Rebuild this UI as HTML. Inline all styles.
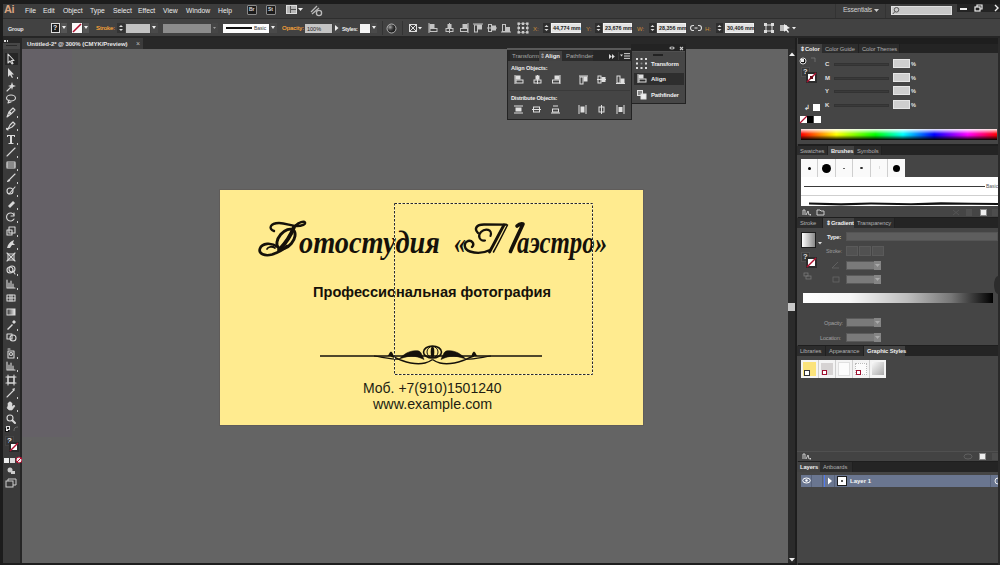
<!DOCTYPE html>
<html><head><meta charset="utf-8">
<style>
*{margin:0;padding:0;box-sizing:border-box}
html,body{width:1000px;height:565px;overflow:hidden;background:#1c1c1c;font-family:"Liberation Sans",sans-serif;color:#e6e6e6;position:relative}
.a{position:absolute}
.t{position:absolute;white-space:nowrap;font-size:6px;line-height:8px}
svg.a{overflow:visible}
</style></head><body>
<div class="a" style="left:3px;top:4px;width:997px;height:14px;background:#3c3c3c;"></div>
<div class="a" style="left:3px;top:18px;width:997px;height:1px;background:#2e2e2e;"></div>
<div class="t" style="left:4px;top:3px;font-size:11px;line-height:13px;color:#d8a481;font-weight:bold;letter-spacing:-0.5px;line-height:13px">Ai</div>
<div class="t" style="left:25px;top:7px;font-size:6.8px;line-height:8.8px;color:#ececec;line-height:8px">File</div>
<div class="t" style="left:43px;top:7px;font-size:6.8px;line-height:8.8px;color:#ececec;line-height:8px">Edit</div>
<div class="t" style="left:63px;top:7px;font-size:6.8px;line-height:8.8px;color:#ececec;line-height:8px">Object</div>
<div class="t" style="left:90px;top:7px;font-size:6.8px;line-height:8.8px;color:#ececec;line-height:8px">Type</div>
<div class="t" style="left:113px;top:7px;font-size:6.8px;line-height:8.8px;color:#ececec;line-height:8px">Select</div>
<div class="t" style="left:138px;top:7px;font-size:6.8px;line-height:8.8px;color:#ececec;line-height:8px">Effect</div>
<div class="t" style="left:163px;top:7px;font-size:6.8px;line-height:8.8px;color:#ececec;line-height:8px">View</div>
<div class="t" style="left:186px;top:7px;font-size:6.8px;line-height:8.8px;color:#ececec;line-height:8px">Window</div>
<div class="t" style="left:218px;top:7px;font-size:6.8px;line-height:8.8px;color:#ececec;line-height:8px">Help</div>
<div class="a" style="left:247px;top:5px;width:10px;height:10px;background:#1c1c1c;border:1px solid #8a8a8a;border-radius:1px"></div>
<div class="t" style="left:249px;top:6px;font-size:5px;line-height:7px;color:#ddd;font-weight:bold;line-height:7px">Br</div>
<div class="a" style="left:266px;top:5px;width:10px;height:10px;background:#1c1c1c;border:1px solid #8a8a8a;border-radius:1px"></div>
<div class="t" style="left:268px;top:6px;font-size:5px;line-height:7px;color:#ddd;font-weight:bold;line-height:7px">St</div>
<div class="a" style="left:286px;top:5px;width:11px;height:9px;background:#b5b5b5;border:1px solid #ddd"></div>
<div class="a" style="left:290px;top:6px;width:1px;height:7px;background:#555;"></div>
<div class="a" style="left:291px;top:9px;width:5px;height:1px;background:#555;"></div>
<svg class="a" style="left:298px;top:8px;" width="5" height="4" viewBox="0 0 5 4"><path d="M0 0 L5 0 L2.5 3 Z" fill="#eee"/></svg>
<svg class="a" style="left:309px;top:5px;" width="14" height="11" viewBox="0 0 14 11"><g fill="none" stroke="#bbb" stroke-width="1.3"><path d="M2 7 L8 1"/><path d="M3 9 L10 3"/><circle cx="10" cy="8" r="2.6"/></g></svg>
<div class="a" style="left:835px;top:4px;width:1px;height:14px;background:#333;"></div>
<div class="t" style="left:843px;top:6px;font-size:6.8px;line-height:8.8px;color:#d0d0d0;line-height:8px;letter-spacing:-0.2px">Essentials</div>
<svg class="a" style="left:874px;top:9px;" width="5" height="3" viewBox="0 0 5 3"><path d="M0 0 L5 0 L2.5 3 Z" fill="#ccc"/></svg>
<div class="a" style="left:885px;top:4px;width:1px;height:14px;background:#333;"></div>
<div class="a" style="left:891px;top:6px;width:61px;height:9px;background:#c9c9c9;border:1px solid #e0e0e0"></div>
<svg class="a" style="left:892px;top:6px;" width="8" height="9" viewBox="0 0 8 9"><g fill="none" stroke="#555" stroke-width="1"><circle cx="4.5" cy="3.8" r="2.3"/><path d="M3 5.5 L0.8 8"/></g></svg>
<div class="a" style="left:957px;top:4px;width:43px;height:8px;background:#242424;"></div>
<div class="a" style="left:960px;top:8px;width:7px;height:2px;background:#eee;"></div>
<svg class="a" style="left:974px;top:4px;" width="10" height="8" viewBox="0 0 10 8"><g fill="none" stroke="#eee" stroke-width="1.2"><rect x="1" y="3" width="5" height="4"/><path d="M3 3 V1 H8 V5 H6"/></g></svg>
<svg class="a" style="left:994px;top:4px;" width="6" height="8" viewBox="0 0 6 8"><path d="M1 1 L4 4 L1 7" fill="none" stroke="#eee" stroke-width="1.4"/></svg>
<div class="a" style="left:3px;top:19px;width:997px;height:17px;background:#424242;"></div>
<div class="a" style="left:3px;top:36px;width:997px;height:2px;background:#262626;"></div>
<div class="t" style="left:8px;top:24.5px;font-size:5.5px;line-height:7.5px;color:#e6e6e6;font-weight:bold;line-height:8px;letter-spacing:-0.2px">Group</div>
<div class="a" style="left:51px;top:23px;width:9px;height:10px;background:#1e1e1e;border:1px solid #ddd"></div>
<div class="t" style="left:53px;top:24px;font-size:7px;line-height:9px;color:#eee;font-weight:bold;line-height:8px">?</div>
<div class="a" style="left:61px;top:23px;width:6px;height:10px;background:#555;"></div>
<svg class="a" style="left:62px;top:26px;" width="5" height="4" viewBox="0 0 5 4"><path d="M0 0 L4 0 L2 3 Z" fill="#eee"/></svg>
<div class="a" style="left:72px;top:23px;width:10px;height:10px;background:#fafafa;"></div>
<svg class="a" style="left:72px;top:23px;" width="10" height="10" viewBox="0 0 10 10"><path d="M9 1 L1 9" stroke="#b01030" stroke-width="1.6"/></svg>
<div class="a" style="left:83px;top:23px;width:6px;height:10px;background:#555;"></div>
<svg class="a" style="left:84px;top:26px;" width="5" height="4" viewBox="0 0 5 4"><path d="M0 0 L4 0 L2 3 Z" fill="#eee"/></svg>
<div class="t" style="left:96px;top:24px;font-size:6px;line-height:8px;color:#e89a3a;line-height:8px;text-shadow:0 0 .5px #e89a3a">Stroke:</div>
<div class="a" style="left:117px;top:23px;width:8px;height:10px;background:#333;"></div>
<svg class="a" style="left:117px;top:23px;" width="8" height="10" viewBox="0 0 8 10"><path d="M2 4 L4 2 L6 4 Z M2 6 L6 6 L4 8 Z" fill="#ddd"/></svg>
<div class="a" style="left:126px;top:23.5px;width:24px;height:9.5px;background:#c2c2c2;"></div>
<div class="a" style="left:151px;top:23px;width:7px;height:10px;background:#4a4a4a;"></div>
<svg class="a" style="left:152px;top:26px;" width="5" height="4" viewBox="0 0 5 4"><path d="M0 0 L4 0 L2 3 Z" fill="#eee"/></svg>
<div class="a" style="left:163px;top:23.5px;width:48px;height:9.5px;background:#8c8c8c;"></div>
<div class="a" style="left:212px;top:23px;width:6px;height:10px;background:#464646;"></div>
<svg class="a" style="left:213px;top:27px;" width="4" height="3" viewBox="0 0 4 3"><path d="M0 0 L3 0 L1.5 2 Z" fill="#999"/></svg>
<div class="a" style="left:223px;top:23.5px;width:46px;height:9.5px;background:#fcfcfc;"></div>
<div class="a" style="left:226px;top:27px;width:26px;height:2px;background:#111;"></div>
<div class="t" style="left:254px;top:24.5px;font-size:5px;line-height:7px;color:#333;line-height:7px">Basic</div>
<div class="a" style="left:270px;top:23px;width:7px;height:10px;background:#4a4a4a;"></div>
<svg class="a" style="left:271px;top:26px;" width="5" height="4" viewBox="0 0 5 4"><path d="M0 0 L4 0 L2 3 Z" fill="#eee"/></svg>
<div class="t" style="left:282px;top:24px;font-size:6px;line-height:8px;color:#e89a3a;line-height:8px;text-shadow:0 0 .5px #e89a3a">Opacity:</div>
<div class="a" style="left:305px;top:23.5px;width:27px;height:9.5px;background:#c4c4c4;"></div>
<div class="t" style="left:307px;top:24.5px;font-size:5.5px;line-height:7.5px;color:#222;line-height:8px">100%</div>
<div class="a" style="left:333px;top:23px;width:7px;height:10px;background:#4a4a4a;"></div>
<svg class="a" style="left:335px;top:25px;" width="4" height="6" viewBox="0 0 4 6"><path d="M0 0 L3.5 3 L0 6 Z" fill="#eee"/></svg>
<div class="t" style="left:342px;top:24.5px;font-size:5.4px;line-height:7.4px;color:#eee;font-weight:bold;line-height:8px;letter-spacing:-0.3px">Styles:</div>
<div class="a" style="left:360px;top:23.5px;width:10px;height:9.5px;background:#f4f4f4;"></div>
<div class="a" style="left:371px;top:23px;width:6px;height:10px;background:#4a4a4a;"></div>
<svg class="a" style="left:372px;top:26px;" width="5" height="4" viewBox="0 0 5 4"><path d="M0 0 L4 0 L2 3 Z" fill="#eee"/></svg>
<div class="a" style="left:382px;top:21px;width:1px;height:14px;background:#333;"></div>
<svg class="a" style="left:386px;top:23px;" width="11" height="11" viewBox="0 0 11 11"><defs><radialGradient id="rc" cx="35%" cy="35%"><stop offset="0" stop-color="#aaa"/><stop offset=".6" stop-color="#444"/><stop offset="1" stop-color="#222"/></radialGradient></defs><circle cx="5.5" cy="5.5" r="4.5" fill="url(#rc)" stroke="#ccc" stroke-width=".8"/></svg>
<div class="a" style="left:402px;top:21px;width:1px;height:14px;background:#333;"></div>
<svg class="a" style="left:408px;top:23px;" width="14" height="10" viewBox="0 0 14 10"><g fill="none" stroke="#ddd" stroke-width="1"><rect x="1.5" y="1.5" width="7" height="7"/><path d="M1.5 1.5 L8.5 8.5 M8.5 1.5 L1.5 8.5"/></g><path d="M10 4 L14 4 L12 6.5 Z" fill="#eee"/></svg>
<svg class="a" style="left:428px;top:23px;" width="10" height="10" viewBox="0 0 10 10"><g fill="none" stroke="#c4c4c4" stroke-width="1"><path d="M1 0 V10"/><rect x="2" y="1.5" width="4" height="3" fill="#c4c4c4"/><rect x="2" y="5.5" width="7" height="3"/></g></svg>
<svg class="a" style="left:445px;top:23px;" width="10" height="10" viewBox="0 0 10 10"><g fill="none" stroke="#c4c4c4" stroke-width="1"><path d="M4.5 0 V10"/><rect x="3" y="1.5" width="3" height="3" fill="#c4c4c4"/><rect x="1" y="5.5" width="7" height="3"/></g></svg>
<svg class="a" style="left:460px;top:23px;" width="10" height="10" viewBox="0 0 10 10"><g fill="none" stroke="#c4c4c4" stroke-width="1"><path d="M8 0 V10"/><rect x="3" y="1.5" width="4" height="3" fill="#c4c4c4"/><rect x="0.5" y="5.5" width="7" height="3"/></g></svg>
<svg class="a" style="left:473px;top:23px;" width="10" height="10" viewBox="0 0 10 10"><g fill="none" stroke="#c4c4c4" stroke-width="1"><path d="M0 1 H10"/><rect x="1.5" y="2" width="3" height="7"/><rect x="5.5" y="2" width="3" height="4" fill="#c4c4c4"/></g></svg>
<svg class="a" style="left:487px;top:23px;" width="10" height="10" viewBox="0 0 10 10"><g fill="none" stroke="#c4c4c4" stroke-width="1"><path d="M0 5 H10"/><rect x="1.5" y="1.5" width="3" height="7"/><rect x="5.5" y="3" width="3" height="4" fill="#c4c4c4"/></g></svg>
<svg class="a" style="left:501px;top:23px;" width="10" height="10" viewBox="0 0 10 10"><g fill="none" stroke="#c4c4c4" stroke-width="1"><path d="M0 9 H10"/><rect x="1.5" y="1.5" width="3" height="7"/><rect x="5.5" y="4.5" width="3" height="4" fill="#c4c4c4"/></g></svg>
<svg class="a" style="left:517px;top:22px;" width="12" height="12" viewBox="0 0 12 12"><g fill="#ddd"><rect x="0.5" y="0.5" width="2.4" height="2.4"/><rect x="0.5" y="4.8" width="2.4" height="2.4"/><rect x="0.5" y="9.1" width="2.4" height="2.4"/><rect x="4.8" y="0.5" width="2.4" height="2.4"/><rect x="4.8" y="4.8" width="2.4" height="2.4"/><rect x="4.8" y="9.1" width="2.4" height="2.4"/><rect x="9.1" y="0.5" width="2.4" height="2.4"/><rect x="9.1" y="4.8" width="2.4" height="2.4"/><rect x="9.1" y="9.1" width="2.4" height="2.4"/></g><g fill="none" stroke="#bbb" stroke-width=".6"><rect x="1.7" y="1.7" width="8.6" height="8.6"/></g></svg>
<div class="t" style="left:533px;top:24.5px;font-size:6px;line-height:8px;color:#c98a3a;line-height:8px">X:</div>
<div class="a" style="left:543px;top:23px;width:7px;height:10px;background:#2e2e2e;"></div>
<svg class="a" style="left:543px;top:23px;" width="7" height="10" viewBox="0 0 7 10"><path d="M1.5 4 L3.5 2 L5.5 4 Z M1.5 6 L5.5 6 L3.5 8 Z" fill="#ddd"/></svg>
<div class="a" style="left:551px;top:22.5px;width:30px;height:10px;background:#e2e2e2;border:1px solid #f2f2f2"></div>
<div class="t" style="left:553px;top:24.5px;font-size:5.4px;line-height:7.4px;color:#1a1a1a;font-weight:bold;line-height:7px">44,774 mm</div>
<div class="t" style="left:586px;top:24.5px;font-size:6px;line-height:8px;color:#c98a3a;line-height:8px">Y:</div>
<div class="a" style="left:595px;top:23px;width:7px;height:10px;background:#2e2e2e;"></div>
<svg class="a" style="left:595px;top:23px;" width="7" height="10" viewBox="0 0 7 10"><path d="M1.5 4 L3.5 2 L5.5 4 Z M1.5 6 L5.5 6 L3.5 8 Z" fill="#ddd"/></svg>
<div class="a" style="left:603px;top:22.5px;width:29px;height:10px;background:#e2e2e2;border:1px solid #f2f2f2"></div>
<div class="t" style="left:605px;top:24.5px;font-size:5.4px;line-height:7.4px;color:#1a1a1a;font-weight:bold;line-height:7px">23,676 mm</div>
<div class="t" style="left:637px;top:24.5px;font-size:6px;line-height:8px;color:#c98a3a;line-height:8px">W:</div>
<div class="a" style="left:649px;top:23px;width:7px;height:10px;background:#2e2e2e;"></div>
<svg class="a" style="left:649px;top:23px;" width="7" height="10" viewBox="0 0 7 10"><path d="M1.5 4 L3.5 2 L5.5 4 Z M1.5 6 L5.5 6 L3.5 8 Z" fill="#ddd"/></svg>
<div class="a" style="left:657px;top:22.5px;width:29px;height:10px;background:#e2e2e2;border:1px solid #f2f2f2"></div>
<div class="t" style="left:659px;top:24.5px;font-size:5.4px;line-height:7.4px;color:#1a1a1a;font-weight:bold;line-height:7px">28,356 mm</div>
<svg class="a" style="left:691px;top:24px;" width="10" height="8" viewBox="0 0 10 8"><g fill="none" stroke="#ddd" stroke-width="1.1"><path d="M3 1.5 H2 A2.5 2.5 0 0 0 2 6.5 H3"/><path d="M7 1.5 H8 A2.5 2.5 0 0 1 8 6.5 H7"/><path d="M3.5 4 H6.5"/></g></svg>
<div class="t" style="left:705px;top:24.5px;font-size:6px;line-height:8px;color:#c98a3a;line-height:8px">H:</div>
<div class="a" style="left:716px;top:23px;width:7px;height:10px;background:#2e2e2e;"></div>
<svg class="a" style="left:716px;top:23px;" width="7" height="10" viewBox="0 0 7 10"><path d="M1.5 4 L3.5 2 L5.5 4 Z M1.5 6 L5.5 6 L3.5 8 Z" fill="#ddd"/></svg>
<div class="a" style="left:725px;top:22.5px;width:29px;height:10px;background:#e2e2e2;border:1px solid #f2f2f2"></div>
<div class="t" style="left:727px;top:24.5px;font-size:5.4px;line-height:7.4px;color:#1a1a1a;font-weight:bold;line-height:7px">30,406 mm</div>
<svg class="a" style="left:764px;top:23px;" width="10" height="10" viewBox="0 0 10 10"><g fill="none" stroke="#ddd" stroke-width="1"><rect x="2" y="2" width="6" height="6"/></g><g fill="#ddd"><rect x="0" y="0" width="3" height="3"/><rect x="7" y="0" width="3" height="3"/><rect x="0" y="7" width="3" height="3"/><rect x="7" y="7" width="3" height="3"/></g></svg>
<svg class="a" style="left:780px;top:23px;" width="17" height="11" viewBox="0 0 17 11"><g fill="#bbb"><rect x="0" y="2" width="7" height="6"/><path d="M4 1 L10 5 L7 6 L9 9 L8 10 L6 7 L4 9 Z" fill="#eee"/></g><path d="M12 4 L16 4 L14 6.5 Z" fill="#eee"/></svg>
<div class="a" style="left:3px;top:38px;width:792px;height:11px;background:#282828;"></div>
<div class="a" style="left:22px;top:38px;width:121px;height:11px;background:#3b3b3b;"></div>
<div class="t" style="left:27px;top:39.5px;font-size:6px;line-height:8px;color:#e6e6e6;font-weight:bold;line-height:8px;letter-spacing:-0.05px">Untitled-2* @ 300% (CMYK/Preview)</div>
<div class="t" style="left:136px;top:39px;font-size:7px;line-height:9px;color:#bbb;line-height:9px">&#215;</div>
<div class="a" style="left:3px;top:38px;width:18px;height:527px;background:#3a3a3a;"></div>
<div class="a" style="left:3px;top:38px;width:18px;height:5px;background:#262626;"></div>
<div class="a" style="left:4px;top:40px;width:1.5px;height:1.5px;background:#ddd;"></div>
<div class="a" style="left:6.5px;top:40px;width:1.5px;height:1.5px;background:#ddd;"></div>
<div class="a" style="left:3px;top:43px;width:18px;height:6px;background:#474747;"></div>
<div class="a" style="left:6px;top:45px;width:11px;height:1.2px;background:#2a2a2a;"></div>
<div class="a" style="left:20px;top:38px;width:2px;height:527px;background:#262626;"></div>
<div class="a" style="left:5px;top:53px;width:13px;height:12px;background:#262626"></div>
<svg class="a" style="left:5px;top:53px" width="12" height="12" viewBox="0 0 12 12"><g fill="none" stroke="#d8d8d8" stroke-width="1.1" stroke-linejoin="round" stroke-linecap="round"><path d="M3 1 L3 10 L5 8 L7 11 L8 10.5 L6.5 7.5 L9 7.5 Z"/></g></svg>
<svg class="a" style="left:5px;top:67px" width="12" height="12" viewBox="0 0 12 12"><path d="M3 1 L3 10 L5 8 L7 11 L8 10.5 L6.5 7.5 L9 7.5 Z" fill="#d8d8d8"/></svg>
<div class="a" style="left:16.5px;top:77px;width:1.6px;height:1.6px;background:#ccc"></div>
<svg class="a" style="left:5px;top:80px" width="12" height="12" viewBox="0 0 12 12"><g fill="none" stroke="#d8d8d8" stroke-width="1.1" stroke-linejoin="round" stroke-linecap="round"><path d="M2 11 L7 6"/></g><path d="M7 2 L8 5 L11 6 L8 7 L7 10 L6 7 L3 6 L6 5 Z" fill="#d8d8d8"/></svg>
<svg class="a" style="left:5px;top:93px" width="12" height="12" viewBox="0 0 12 12"><g fill="none" stroke="#d8d8d8" stroke-width="1.1" stroke-linejoin="round" stroke-linecap="round"><ellipse cx="6" cy="5" rx="4.5" ry="3"/><path d="M4 7 L3 10 L6 9"/></g></svg>
<svg class="a" style="left:5px;top:106px" width="12" height="12" viewBox="0 0 12 12"><g fill="none" stroke="#d8d8d8" stroke-width="1.1" stroke-linejoin="round" stroke-linecap="round"><path d="M2 11 L4 6 L8 2 L10 4 L6 8 Z"/><circle cx="5" cy="7" r=".6"/></g></svg>
<div class="a" style="left:16.5px;top:116px;width:1.6px;height:1.6px;background:#ccc"></div>
<svg class="a" style="left:5px;top:119px" width="12" height="12" viewBox="0 0 12 12"><g fill="none" stroke="#d8d8d8" stroke-width="1.1" stroke-linejoin="round" stroke-linecap="round"><path d="M3 10 L5 6 L8 3 L10 5 L7 8 Z M3 10 C1 8 1 11 3 11"/></g></svg>
<div class="a" style="left:16.5px;top:129px;width:1.6px;height:1.6px;background:#ccc"></div>
<svg class="a" style="left:5px;top:133px" width="12" height="12" viewBox="0 0 12 12"><path d="M2 2 H10 V4 H9 V3 H7 V10 H8.5 V11 H3.5 V10 H5 V3 H3 V4 H2 Z" fill="#d8d8d8"/></svg>
<div class="a" style="left:16.5px;top:143px;width:1.6px;height:1.6px;background:#ccc"></div>
<svg class="a" style="left:5px;top:146px" width="12" height="12" viewBox="0 0 12 12"><g fill="none" stroke="#d8d8d8" stroke-width="1.1" stroke-linejoin="round" stroke-linecap="round"><path d="M2 10 L10 2"/></g></svg>
<div class="a" style="left:16.5px;top:156px;width:1.6px;height:1.6px;background:#ccc"></div>
<svg class="a" style="left:5px;top:159px" width="12" height="12" viewBox="0 0 12 12"><g fill="none" stroke="#d8d8d8" stroke-width="1.1" stroke-linejoin="round" stroke-linecap="round"><rect x="2" y="3" width="8" height="6"/><path d="M2 5 H10 M2 7 H10"/></g></svg>
<div class="a" style="left:16.5px;top:169px;width:1.6px;height:1.6px;background:#ccc"></div>
<svg class="a" style="left:5px;top:172px" width="12" height="12" viewBox="0 0 12 12"><g fill="none" stroke="#d8d8d8" stroke-width="1.1" stroke-linejoin="round" stroke-linecap="round"><path d="M10 2 L5 7"/></g><path d="M5 7 C3 7 2 9 2 10 C4 10 6 9 5 7Z" fill="#d8d8d8"/></svg>
<div class="a" style="left:16.5px;top:182px;width:1.6px;height:1.6px;background:#ccc"></div>
<svg class="a" style="left:5px;top:185px" width="12" height="12" viewBox="0 0 12 12"><g fill="none" stroke="#d8d8d8" stroke-width="1.1" stroke-linejoin="round" stroke-linecap="round"><circle cx="5" cy="6" r="3"/><path d="M10 2 L4 9"/></g></svg>
<div class="a" style="left:16.5px;top:195px;width:1.6px;height:1.6px;background:#ccc"></div>
<svg class="a" style="left:5px;top:198px" width="12" height="12" viewBox="0 0 12 12"><path d="M3 8 L8 3 L10 5 L5 10 Z" fill="#d8d8d8"/></svg>
<div class="a" style="left:16.5px;top:208px;width:1.6px;height:1.6px;background:#ccc"></div>
<svg class="a" style="left:5px;top:211px" width="12" height="12" viewBox="0 0 12 12"><g fill="none" stroke="#d8d8d8" stroke-width="1.1" stroke-linejoin="round" stroke-linecap="round"><path d="M9 4 A4 4 0 1 0 9 8"/><path d="M9 2 V5 H6"/></g></svg>
<div class="a" style="left:16.5px;top:221px;width:1.6px;height:1.6px;background:#ccc"></div>
<svg class="a" style="left:5px;top:225px" width="12" height="12" viewBox="0 0 12 12"><g fill="none" stroke="#d8d8d8" stroke-width="1.1" stroke-linejoin="round" stroke-linecap="round"><rect x="2" y="5" width="5" height="5"/><rect x="4" y="2" width="6" height="6"/></g></svg>
<div class="a" style="left:16.5px;top:235px;width:1.6px;height:1.6px;background:#ccc"></div>
<svg class="a" style="left:5px;top:238px" width="12" height="12" viewBox="0 0 12 12"><path d="M2 10 C3 6 5 4 7 3 L9 2 L8 5 L10 7 L7 7 L5 10 Z" fill="#d8d8d8"/></svg>
<div class="a" style="left:16.5px;top:248px;width:1.6px;height:1.6px;background:#ccc"></div>
<svg class="a" style="left:5px;top:251px" width="12" height="12" viewBox="0 0 12 12"><g fill="none" stroke="#d8d8d8" stroke-width="1.1" stroke-linejoin="round" stroke-linecap="round"><path d="M2 2 L10 10 M10 2 L2 10"/><rect x="3" y="3" width="6" height="6"/></g></svg>
<svg class="a" style="left:5px;top:264px" width="12" height="12" viewBox="0 0 12 12"><g fill="none" stroke="#d8d8d8" stroke-width="1.1" stroke-linejoin="round" stroke-linecap="round"><circle cx="5" cy="6" r="3"/><circle cx="7" cy="5" r="3"/><path d="M8 7 L10 10"/></g></svg>
<div class="a" style="left:16.5px;top:274px;width:1.6px;height:1.6px;background:#ccc"></div>
<svg class="a" style="left:5px;top:278px" width="12" height="12" viewBox="0 0 12 12"><g fill="none" stroke="#d8d8d8" stroke-width="1.1" stroke-linejoin="round" stroke-linecap="round"><path d="M2 2 V10 H10 M4 9 V5 M6 9 V3 M8 9 V6"/></g></svg>
<div class="a" style="left:16.5px;top:288px;width:1.6px;height:1.6px;background:#ccc"></div>
<svg class="a" style="left:5px;top:292px" width="12" height="12" viewBox="0 0 12 12"><g fill="none" stroke="#d8d8d8" stroke-width="1.1" stroke-linejoin="round" stroke-linecap="round"><rect x="2" y="3" width="8" height="6"/><path d="M5 3 V9 M7 3 V9 M2 6 H10"/></g></svg>
<svg class="a" style="left:5px;top:306px" width="12" height="12" viewBox="0 0 12 12"><rect x="2" y="3" width="8" height="6" fill="url(#tg)" stroke="#d8d8d8" stroke-width="1"/><defs><linearGradient id="tg"><stop offset="0" stop-color="#333"/><stop offset="1" stop-color="#eee"/></linearGradient></defs></svg>
<svg class="a" style="left:5px;top:319px" width="12" height="12" viewBox="0 0 12 12"><path d="M2 10 L7 5 L8 6 L3 11Z M7 3 L9 1 L11 3 L9 5Z" fill="#d8d8d8"/></svg>
<div class="a" style="left:16.5px;top:329px;width:1.6px;height:1.6px;background:#ccc"></div>
<svg class="a" style="left:5px;top:331px" width="12" height="12" viewBox="0 0 12 12"><g fill="none" stroke="#d8d8d8" stroke-width="1.1" stroke-linejoin="round" stroke-linecap="round"><rect x="2" y="3" width="5" height="5"/><circle cx="8" cy="7" r="3"/></g></svg>
<svg class="a" style="left:5px;top:347px" width="12" height="12" viewBox="0 0 12 12"><g fill="none" stroke="#d8d8d8" stroke-width="1.1" stroke-linejoin="round" stroke-linecap="round"><rect x="3" y="4" width="6" height="7"/><circle cx="6" cy="7" r="1.5"/><path d="M3 2 H5"/></g></svg>
<div class="a" style="left:16.5px;top:357px;width:1.6px;height:1.6px;background:#ccc"></div>
<svg class="a" style="left:5px;top:360px" width="12" height="12" viewBox="0 0 12 12"><g fill="none" stroke="#d8d8d8" stroke-width="1.1" stroke-linejoin="round" stroke-linecap="round"><path d="M2 2 V10 H10 M4 9 V5 M6 9 V3 M8 9 V6"/></g></svg>
<div class="a" style="left:16.5px;top:370px;width:1.6px;height:1.6px;background:#ccc"></div>
<svg class="a" style="left:5px;top:374px" width="12" height="12" viewBox="0 0 12 12"><g fill="none" stroke="#d8d8d8" stroke-width="1.1" stroke-linejoin="round" stroke-linecap="round"><rect x="3" y="3" width="6" height="6"/><path d="M1 3 H11 M1 9 H11 M3 1 V11 M9 1 V11"/></g></svg>
<svg class="a" style="left:5px;top:387px" width="12" height="12" viewBox="0 0 12 12"><g fill="none" stroke="#d8d8d8" stroke-width="1.1" stroke-linejoin="round" stroke-linecap="round"><path d="M2 10 L9 3"/></g><path d="M7 2 L10 1 L9 4 Z" fill="#d8d8d8"/></svg>
<div class="a" style="left:16.5px;top:397px;width:1.6px;height:1.6px;background:#ccc"></div>
<svg class="a" style="left:5px;top:400px" width="12" height="12" viewBox="0 0 12 12"><path d="M3 6 V3 H4 V6 V2 H5 V6 V2 H6 V6 V3 H7 V7 L9 5 L10 6 L7 10 H4 L2 8 Z" fill="#d8d8d8" stroke="#d8d8d8" stroke-width=".6"/></svg>
<div class="a" style="left:16.5px;top:410px;width:1.6px;height:1.6px;background:#ccc"></div>
<svg class="a" style="left:5px;top:413px" width="12" height="12" viewBox="0 0 12 12"><g fill="none" stroke="#d8d8d8" stroke-width="1.1" stroke-linejoin="round" stroke-linecap="round"><circle cx="5" cy="5" r="3"/><path d="M7.5 7.5 L10 10" stroke-width="2"/></g></svg>
<div class="a" style="left:5px;top:428px;width:4px;height:4px;background:#fff;border:1px solid #111"></div>
<div class="a" style="left:6px;top:426px;width:4px;height:4px;background:#222;border:1px solid #ddd"></div>
<svg class="a" style="left:13px;top:426px" width="6" height="6"><path d="M1 5 C1 2 2 1 5 1" fill="none" stroke="#777" stroke-width=".8"/></svg>
<div class="a" style="left:5px;top:436px;width:9px;height:10px;background:#363636;border:1px solid #444"></div>
<div class="t" style="left:7px;top:436px;font-size:8px;line-height:9px;color:#eee;font-weight:bold">?</div>
<div class="a" style="left:9px;top:442px;width:10px;height:10px;background:#fff;border:2px solid #2a2a2a"></div>
<svg class="a" style="left:9px;top:442px" width="10" height="10"><path d="M9 1 L1 9" stroke="#b01030" stroke-width="1.5"/></svg>
<div class="a" style="left:4px;top:458px;width:5px;height:5px;background:#eee"></div>
<div class="a" style="left:10px;top:458px;width:5px;height:5px;background:#ddd"></div>
<svg class="a" style="left:15px;top:456px" width="8" height="8"><circle cx="4" cy="4" r="3" fill="#eee" stroke="#b01030" stroke-width="1"/><path d="M2 6 L6 2" stroke="#b01030" stroke-width="1"/></svg>
<svg class="a" style="left:6px;top:466px" width="10" height="9"><g fill="#ccc"><circle cx="4" cy="4" r="2.5"/><rect x="5" y="5" width="4" height="3"/></g></svg>
<svg class="a" style="left:5px;top:477px" width="12" height="11"><g fill="none" stroke="#ccc" stroke-width="1"><rect x="1" y="4" width="7" height="6"/><path d="M3 4 V2 H11 V8 H8"/></g></svg>
<div class="a" style="left:22px;top:49px;width:766px;height:514px;background:#646464"></div>
<div class="a" id="purple" style="left:22px;top:49px;width:50px;height:388px;background:#656167"></div>
<div class="a" style="left:788px;top:49px;width:8px;height:514px;background:#2b2b2b"></div>
<div class="a" style="left:788px;top:303px;width:8px;height:8px;background:#c8c8c8"></div>
<svg class="a" style="left:788px;top:51px" width="8" height="6"><path d="M1 5 L4 1.5 L7 5 Z" fill="#eee"/></svg>
<svg class="a" style="left:788px;top:557px" width="8" height="6"><path d="M1 1 L4 4.5 L7 1 Z" fill="#eee"/></svg>
<div class="a" style="left:3px;top:563px;width:794px;height:2px;background:#1e1e1e"></div>
<div class="a" style="left:795px;top:38px;width:205px;height:527px;background:#1e1e1e;"></div>
<div class="a" style="left:797px;top:38px;width:1px;height:527px;background:#3a3a3a;"></div>
<div class="a" style="left:797px;top:44px;width:201px;height:9px;background:#242424;"></div>
<div class="a" style="left:797px;top:44px;width:25px;height:9px;background:#424242;"></div>
<div class="t" style="left:800px;top:44.5px;font-size:5.8px;line-height:7.8px;color:#f0f0f0;font-weight:bold;line-height:8px;letter-spacing:-0.1px">&#8661;Color</div>
<div class="a" style="left:822px;top:44px;width:37px;height:9px;background:#2c2c2c;border-right:1px solid #202020"></div>
<div class="t" style="left:825px;top:44.5px;font-size:5.8px;line-height:7.8px;color:#b0b0b0;line-height:8px;letter-spacing:-0.1px">Color Guide</div>
<div class="a" style="left:859px;top:44px;width:41px;height:9px;background:#2c2c2c;border-right:1px solid #202020"></div>
<div class="t" style="left:862px;top:44.5px;font-size:5.8px;line-height:7.8px;color:#b0b0b0;line-height:8px;letter-spacing:-0.1px">Color Themes</div>
<div class="a" style="left:797px;top:53px;width:201px;height:91px;background:#454545;"></div>
<svg class="a" style="left:799px;top:57px" width="8" height="8" viewBox="0 0 8 8"><circle cx="4" cy="4" r="3" fill="#111" stroke="#ddd" stroke-width="1"/><rect x="2" y="2" width="3" height="3" fill="#eee"/></svg>
<svg class="a" style="left:810px;top:57px" width="7" height="6" viewBox="0 0 7 6"><path d="M1 1 H5 V5" fill="none" stroke="#777" stroke-width=".8"/></svg>
<div class="a" style="left:801px;top:67px;width:9px;height:10px;background:#3a3a3a;border:1px solid #505050"></div>
<div class="t" style="left:803px;top:67px;font-size:7.5px;line-height:9.5px;color:#ddd;font-weight:bold;line-height:9px">?</div>
<div class="a" style="left:806px;top:72px;width:11px;height:11px;background:#fff;border:2px solid #2c2c2c"></div>
<svg class="a" style="left:806px;top:72px" width="11" height="11" viewBox="0 0 11 11"><path d="M10 1 L1 10" stroke="#b01030" stroke-width="1.5"/><rect x="4" y="4" width="3" height="3" fill="#6a0a1a"/></svg>
<div class="t" style="left:825px;top:60px;font-size:6px;line-height:8px;color:#e0e0e0;font-weight:bold;line-height:8px">C</div>
<div class="a" style="left:834px;top:62.5px;width:55px;height:3.5px;background:#3a3a3a;border:1px solid #333"></div>
<div class="a" style="left:893px;top:59px;width:17px;height:9px;background:#cfcfcf;border:1px solid #e6e6e6"></div>
<div class="t" style="left:911px;top:60px;font-size:5.5px;line-height:7.5px;color:#e0e0e0;font-weight:bold;line-height:8px">%</div>
<div class="t" style="left:825px;top:74px;font-size:6px;line-height:8px;color:#e0e0e0;font-weight:bold;line-height:8px">M</div>
<div class="a" style="left:834px;top:76.5px;width:55px;height:3.5px;background:#3a3a3a;border:1px solid #333"></div>
<div class="a" style="left:893px;top:73px;width:17px;height:9px;background:#cfcfcf;border:1px solid #e6e6e6"></div>
<div class="t" style="left:911px;top:74px;font-size:5.5px;line-height:7.5px;color:#e0e0e0;font-weight:bold;line-height:8px">%</div>
<div class="t" style="left:825px;top:87px;font-size:6px;line-height:8px;color:#e0e0e0;font-weight:bold;line-height:8px">Y</div>
<div class="a" style="left:834px;top:89.5px;width:55px;height:3.5px;background:#3a3a3a;border:1px solid #333"></div>
<div class="a" style="left:893px;top:86px;width:17px;height:9px;background:#cfcfcf;border:1px solid #e6e6e6"></div>
<div class="t" style="left:911px;top:87px;font-size:5.5px;line-height:7.5px;color:#e0e0e0;font-weight:bold;line-height:8px">%</div>
<div class="t" style="left:825px;top:101px;font-size:6px;line-height:8px;color:#e0e0e0;font-weight:bold;line-height:8px">K</div>
<div class="a" style="left:834px;top:103.5px;width:55px;height:3.5px;background:#3a3a3a;border:1px solid #333"></div>
<div class="a" style="left:893px;top:100px;width:17px;height:9px;background:#cfcfcf;border:1px solid #e6e6e6"></div>
<div class="t" style="left:911px;top:101px;font-size:5.5px;line-height:7.5px;color:#e0e0e0;font-weight:bold;line-height:8px">%</div>
<div class="t" style="left:804px;top:103px;font-size:7px;line-height:9px;color:#ddd;font-weight:bold;line-height:9px">&#8626;</div>
<div class="a" style="left:813px;top:104px;width:7px;height:7px;background:#fff;"></div>
<div class="a" style="left:800px;top:116px;width:7px;height:7px;background:#fff;"></div>
<svg class="a" style="left:800px;top:116px" width="7" height="7" viewBox="0 0 7 7"><path d="M7 0 L0 7" stroke="#b01030" stroke-width="1.2"/></svg>
<div class="a" style="left:807px;top:116px;width:6px;height:7px;background:#000;"></div>
<div class="a" style="left:814px;top:116px;width:7px;height:7px;background:#fff;"></div>
<div class="a" style="left:801px;top:129px;width:196px;height:11px;background:;background:linear-gradient(to bottom,rgba(255,255,255,.95) 0%,rgba(255,255,255,0) 45%,rgba(0,0,0,0) 55%,rgba(0,0,0,1) 100%),linear-gradient(to right,#f00 0%,#ff0 18%,#0f0 38%,#0ff 52%,#00f 68%,#f0f 85%,#f00 100%)"></div>
<div class="a" style="left:797px;top:146px;width:201px;height:9px;background:#242424;"></div>
<div class="a" style="left:797px;top:146px;width:31px;height:9px;background:#2c2c2c;border-right:1px solid #202020"></div>
<div class="t" style="left:800px;top:146.5px;font-size:5.8px;line-height:7.8px;color:#b0b0b0;line-height:8px;letter-spacing:-0.1px">Swatches</div>
<div class="a" style="left:828px;top:146px;width:26px;height:9px;background:#424242;"></div>
<div class="t" style="left:831px;top:146.5px;font-size:5.8px;line-height:7.8px;color:#f0f0f0;font-weight:bold;line-height:8px;letter-spacing:-0.1px">Brushes</div>
<div class="a" style="left:854px;top:146px;width:28px;height:9px;background:#2c2c2c;border-right:1px solid #202020"></div>
<div class="t" style="left:857px;top:146.5px;font-size:5.8px;line-height:7.8px;color:#b0b0b0;line-height:8px;letter-spacing:-0.1px">Symbols</div>
<div class="a" style="left:797px;top:155px;width:201px;height:62px;background:#454545;"></div>
<div class="a" style="left:801px;top:177px;width:197px;height:29px;background:#fff;"></div>
<div class="a" style="left:801px;top:159px;width:104px;height:18px;background:#cfcfcf;"></div>
<div class="a" style="left:801px;top:159px;width:16px;height:18px;background:#fafafa;"></div>
<div class="a" style="left:818px;top:159px;width:17px;height:18px;background:#fafafa;"></div>
<div class="a" style="left:836px;top:159px;width:16px;height:18px;background:#fafafa;"></div>
<div class="a" style="left:853px;top:159px;width:17px;height:18px;background:#fafafa;"></div>
<div class="a" style="left:871px;top:159px;width:16px;height:18px;background:#fafafa;"></div>
<div class="a" style="left:888px;top:159px;width:17px;height:18px;background:#fafafa;"></div>
<div class="a" style="left:807.5px;top:166.5px;width:3px;height:3px;background:#000;border-radius:50%"></div>
<div class="a" style="left:822px;top:164px;width:9px;height:9px;background:#000;border-radius:50%"></div>
<div class="a" style="left:843px;top:167.5px;width:1.5px;height:1.5px;background:#666;"></div>
<div class="a" style="left:859.5px;top:167px;width:3px;height:2px;background:#222;border-radius:50%"></div>
<div class="a" style="left:879px;top:166px;width:1px;height:3px;background:#ddd;"></div>
<div class="a" style="left:893px;top:164.5px;width:7px;height:7px;background:#000;border-radius:50%"></div>
<div class="a" style="left:804px;top:185.5px;width:181px;height:1.5px;background:#3a3a3a;"></div>
<div class="t" style="left:986px;top:183px;font-size:5px;line-height:7px;color:#555;line-height:6px">Basic</div>
<div class="a" style="left:801px;top:195px;width:197px;height:1px;background:#cfcfcf;"></div>
<svg class="a" style="left:801px;top:200px" width="197" height="6" viewBox="0 0 197 6"><path d="M8 2.6 L40 3.2 L70 2.5 L110 3.2 L140 2.2 L170 2.8 L197 3 L197 5 L170 4.8 L140 4.7 L110 5.2 L70 4.6 L40 5.4 L8 4.6 Z" fill="#111"/></svg>
<svg class="a" style="left:802px;top:209px" width="9" height="7" viewBox="0 0 9 7"><g fill="none" stroke="#ccc" stroke-width="1"><path d="M1 6 V1 L3 1 L3 6 M4 6 L6 2 L7 6"/></g><rect x="7.5" y="5" width="1.5" height="1.5" fill="#ccc"/></svg>
<svg class="a" style="left:816px;top:209px" width="10" height="7" viewBox="0 0 10 7"><g fill="none" stroke="#ccc" stroke-width="1"><path d="M1 1 H4 L5 2 H8 V6 H1 Z"/></g></svg>
<svg class="a" style="left:952px;top:209px" width="8" height="7" viewBox="0 0 8 7"><path d="M1 6 L7 1 M1 1 L7 6" stroke="#555" stroke-width="1"/></svg>
<div class="a" style="left:966px;top:209px;width:6px;height:7px;background:#505050;"></div>
<div class="a" style="left:980px;top:209px;width:7px;height:7px;background:#eee;border:1px solid #888"></div>
<div class="a" style="left:992px;top:209px;width:6px;height:7px;background:#4d4d4d;"></div>
<div class="a" style="left:797px;top:218px;width:201px;height:10px;background:#242424;"></div>
<div class="a" style="left:797px;top:218px;width:26px;height:10px;background:#2c2c2c;border-right:1px solid #202020"></div>
<div class="t" style="left:800px;top:219.0px;font-size:5.8px;line-height:7.8px;color:#b0b0b0;line-height:8px;letter-spacing:-0.1px">Stroke</div>
<div class="a" style="left:823px;top:218px;width:31px;height:10px;background:#424242;"></div>
<div class="t" style="left:826px;top:219.0px;font-size:5.8px;line-height:7.8px;color:#f0f0f0;font-weight:bold;line-height:8px;letter-spacing:-0.1px">&#8661;Gradient</div>
<div class="a" style="left:854px;top:218px;width:41px;height:10px;background:#2c2c2c;border-right:1px solid #202020"></div>
<div class="t" style="left:857px;top:219.0px;font-size:5.8px;line-height:7.8px;color:#b0b0b0;line-height:8px;letter-spacing:-0.1px">Transparency</div>
<div class="a" style="left:797px;top:228px;width:201px;height:117px;background:#454545;"></div>
<div class="a" style="left:801px;top:232px;width:15px;height:16px;background:;background:linear-gradient(to right,#fff,#888);border:1px solid #1e1e1e"></div>
<svg class="a" style="left:818px;top:242px" width="4" height="3" viewBox="0 0 4 3"><path d="M0 0 H4 L2 2.5Z" fill="#ddd"/></svg>
<div class="t" style="left:827px;top:233px;font-size:5.8px;line-height:7.8px;color:#eee;font-weight:bold;line-height:8px;letter-spacing:-0.2px">Type:</div>
<div class="a" style="left:846px;top:232px;width:152px;height:9px;background:#5e5e5e;border:1px solid #555"></div>
<div class="t" style="left:826px;top:247px;font-size:5.5px;line-height:7.5px;color:#999;line-height:8px;letter-spacing:-0.2px">Stroke:</div>
<div class="a" style="left:846px;top:246px;width:12px;height:10px;background:#515151;border:1px solid #5a5a5a"></div>
<div class="a" style="left:859px;top:246px;width:12px;height:10px;background:#515151;border:1px solid #5a5a5a"></div>
<div class="a" style="left:872px;top:246px;width:12px;height:10px;background:#515151;border:1px solid #5a5a5a"></div>
<div class="a" style="left:801px;top:252px;width:9px;height:10px;background:#3a3a3a;border:1px solid #505050"></div>
<div class="t" style="left:803px;top:252px;font-size:7.5px;line-height:9.5px;color:#ddd;font-weight:bold;line-height:9px">?</div>
<div class="a" style="left:806px;top:257px;width:11px;height:11px;background:#fff;border:2px solid #2c2c2c"></div>
<svg class="a" style="left:806px;top:257px" width="11" height="11" viewBox="0 0 11 11"><path d="M10 1 L1 10" stroke="#b01030" stroke-width="1.5"/></svg>
<svg class="a" style="left:803px;top:272px" width="9" height="8" viewBox="0 0 9 8"><g fill="none" stroke="#777" stroke-width=".8"><rect x="1" y="1" width="4" height="3"/><rect x="3" y="4" width="5" height="3"/></g></svg>
<svg class="a" style="left:832px;top:262px" width="7" height="7" viewBox="0 0 7 7"><path d="M0 6 L6 0 M0 6 H7" stroke="#666" stroke-width=".8" fill="none"/></svg>
<svg class="a" style="left:832px;top:276px" width="8" height="7" viewBox="0 0 8 7"><rect x="1" y="1" width="6" height="5" fill="none" stroke="#666" stroke-width=".8"/></svg>
<div class="a" style="left:846px;top:261px;width:35px;height:9px;background:#7a7a7a;border:1px solid #5a5a5a"></div>
<div class="a" style="left:874px;top:261px;width:7px;height:9px;background:#858585;"></div>
<svg class="a" style="left:875px;top:264px" width="5" height="3" viewBox="0 0 5 3"><path d="M0 0 H5 L2.5 3Z" fill="#aaa"/></svg>
<div class="a" style="left:846px;top:275px;width:35px;height:9px;background:#7a7a7a;border:1px solid #5a5a5a"></div>
<div class="a" style="left:874px;top:275px;width:7px;height:9px;background:#858585;"></div>
<svg class="a" style="left:875px;top:278px" width="5" height="3" viewBox="0 0 5 3"><path d="M0 0 H5 L2.5 3Z" fill="#aaa"/></svg>
<div class="a" style="left:846px;top:318px;width:35px;height:9px;background:#7a7a7a;border:1px solid #5a5a5a"></div>
<div class="a" style="left:874px;top:318px;width:7px;height:9px;background:#858585;"></div>
<svg class="a" style="left:875px;top:321px" width="5" height="3" viewBox="0 0 5 3"><path d="M0 0 H5 L2.5 3Z" fill="#aaa"/></svg>
<div class="a" style="left:846px;top:333px;width:35px;height:9px;background:#7a7a7a;border:1px solid #5a5a5a"></div>
<div class="a" style="left:874px;top:333px;width:7px;height:9px;background:#858585;"></div>
<svg class="a" style="left:875px;top:336px" width="5" height="3" viewBox="0 0 5 3"><path d="M0 0 H5 L2.5 3Z" fill="#aaa"/></svg>
<div class="a" style="left:803px;top:293px;width:190px;height:10px;background:;background:linear-gradient(to right,#fff 0%,#f6f6f6 25%,#bdbdbd 55%,#777 78%,#000 100%)"></div>
<div class="t" style="left:824px;top:319px;font-size:5.6px;line-height:7.6px;color:#a0a0a0;line-height:8px;letter-spacing:-0.2px">Opacity:</div>
<div class="t" style="left:820px;top:334px;font-size:5.6px;line-height:7.6px;color:#a0a0a0;line-height:8px;letter-spacing:-0.2px">Location:</div>
<div class="a" style="left:797px;top:346px;width:201px;height:10px;background:#242424;"></div>
<div class="a" style="left:797px;top:346px;width:29px;height:10px;background:#2c2c2c;border-right:1px solid #202020"></div>
<div class="t" style="left:800px;top:347.0px;font-size:5.8px;line-height:7.8px;color:#b0b0b0;line-height:8px;letter-spacing:-0.1px">Libraries</div>
<div class="a" style="left:826px;top:346px;width:38px;height:10px;background:#2c2c2c;border-right:1px solid #202020"></div>
<div class="t" style="left:829px;top:347.0px;font-size:5.8px;line-height:7.8px;color:#b0b0b0;line-height:8px;letter-spacing:-0.1px">Appearance</div>
<div class="a" style="left:864px;top:346px;width:41px;height:10px;background:#424242;"></div>
<div class="t" style="left:867px;top:347.0px;font-size:5.8px;line-height:7.8px;color:#f0f0f0;font-weight:bold;line-height:8px;letter-spacing:-0.1px">Graphic Styles</div>
<div class="a" style="left:797px;top:356px;width:201px;height:95px;background:#454545;"></div>
<div class="a" style="left:801px;top:360px;width:85px;height:18px;background:#f4f4f4;"></div>
<div class="a" style="left:818px;top:360px;width:1px;height:18px;background:#cfcfcf;"></div>
<div class="a" style="left:835px;top:360px;width:1px;height:18px;background:#cfcfcf;"></div>
<div class="a" style="left:852px;top:360px;width:1px;height:18px;background:#cfcfcf;"></div>
<div class="a" style="left:869px;top:360px;width:1px;height:18px;background:#cfcfcf;"></div>
<div class="a" style="left:803px;top:362px;width:13px;height:14px;background:#fbe37b;"></div>
<div class="a" style="left:804px;top:370px;width:6px;height:6px;background:#fff;border:1px solid #333"></div>
<div class="a" style="left:821px;top:363px;width:12px;height:12px;background:#d6d3d3;"></div>
<div class="a" style="left:822px;top:370px;width:5px;height:5px;background:#fff;border:1px solid #a01030"></div>
<div class="a" style="left:838px;top:362px;width:12px;height:14px;background:#fcfcfc;border:1px solid #e0e0e0"></div>
<div class="a" style="left:855px;top:363px;width:12px;height:12px;background:#fcfcfc;border:1px dotted #bbb"></div>
<div class="a" style="left:856px;top:370px;width:5px;height:5px;background:#fff;border:1px solid #a01030"></div>
<div class="a" style="left:872px;top:362px;width:12px;height:13px;background:;background:linear-gradient(135deg,#fafafa,#aaa)"></div>
<div class="a" style="left:797px;top:451px;width:201px;height:10px;background:#434343;border-top:1px solid #505050"></div>
<svg class="a" style="left:802px;top:453px" width="9" height="7" viewBox="0 0 9 7"><g fill="none" stroke="#ccc" stroke-width="1"><path d="M1 6 V1 L3 1 L3 6 M4 6 L6 2 L7 6"/></g><rect x="7.5" y="5" width="1.5" height="1.5" fill="#ccc"/></svg>
<svg class="a" style="left:963px;top:453px" width="10" height="7" viewBox="0 0 10 7"><ellipse cx="5" cy="3.5" rx="4" ry="2.5" fill="none" stroke="#666" stroke-width=".8"/></svg>
<div class="a" style="left:979px;top:453px;width:7px;height:7px;background:#eee;border:1px solid #888"></div>
<div class="a" style="left:992px;top:453px;width:6px;height:7px;background:#4d4d4d;"></div>
<div class="a" style="left:797px;top:462px;width:201px;height:10px;background:#242424;"></div>
<div class="a" style="left:797px;top:462px;width:23px;height:10px;background:#424242;"></div>
<div class="t" style="left:800px;top:463.0px;font-size:5.8px;line-height:7.8px;color:#f0f0f0;font-weight:bold;line-height:8px;letter-spacing:-0.1px">Layers</div>
<div class="a" style="left:820px;top:462px;width:33px;height:10px;background:#2c2c2c;border-right:1px solid #202020"></div>
<div class="t" style="left:823px;top:463.0px;font-size:5.8px;line-height:7.8px;color:#b0b0b0;line-height:8px;letter-spacing:-0.1px">Artboards</div>
<div class="a" style="left:797px;top:472px;width:201px;height:91px;background:#454545;"></div>
<div class="a" style="left:801px;top:475px;width:197px;height:12px;background:#6a7690;"></div>
<div class="a" style="left:811px;top:475px;width:1px;height:12px;background:#57627a;"></div>
<div class="a" style="left:822px;top:475px;width:1px;height:12px;background:#57627a;"></div>
<div class="a" style="left:823.5px;top:475px;width:1.5px;height:12px;background:#4f78f0;"></div>
<div class="a" style="left:834px;top:475px;width:1px;height:12px;background:#57627a;"></div>
<svg class="a" style="left:802px;top:477px" width="9" height="7" viewBox="0 0 9 7"><ellipse cx="4.5" cy="3.5" rx="3.8" ry="2.5" fill="none" stroke="#fff" stroke-width="1"/><circle cx="4.5" cy="3.5" r="1.2" fill="#fff"/></svg>
<svg class="a" style="left:827px;top:477px" width="6" height="8" viewBox="0 0 6 8"><path d="M1 0.5 L5 4 L1 7.5 Z" fill="#fff"/></svg>
<div class="a" style="left:837px;top:476px;width:10px;height:10px;background:#fff;border:1px solid #1e1e1e"></div>
<div class="a" style="left:841px;top:480px;width:2px;height:2px;background:#555;"></div>
<div class="t" style="left:850px;top:477px;font-size:6px;line-height:8px;color:#f6f6f6;font-weight:bold;line-height:8px">Layer 1</div>
<div class="a" style="left:990px;top:475px;width:1px;height:12px;background:#57627a;"></div>
<svg class="a" style="left:993px;top:477px" width="6" height="8" viewBox="0 0 6 8"><circle cx="5" cy="4" r="3" fill="none" stroke="#eee" stroke-width="1"/></svg>
<div class="a" style="left:998px;top:38px;width:2px;height:527px;background:#2a2a2a;"></div>
<div class="a" style="left:994px;top:276px;width:8px;height:18px;background:#2c2c2c;border-radius:50%"></div>
<div class="a" style="left:219px;top:189px;width:425px;height:237px;background:#5f5c5a"></div>
<div class="a" style="left:220px;top:190px;width:423px;height:235px;background:#ffeb8f"></div>
<div class="t" style="left:299px;top:226.5px;font-size:31.5px;line-height:31.5px;font-family:'Liberation Serif',serif;font-style:italic;font-weight:bold;color:#15110a;transform-origin:0 0;transform:scaleX(0.9)">отостудия</div>
<div class="t" style="left:454px;top:226.5px;font-size:31.5px;line-height:31.5px;font-family:'Liberation Serif',serif;font-style:italic;font-weight:bold;color:#15110a;transform-origin:0 0;transform:scaleX(0.75)">«</div>
<div class="t" style="left:517px;top:226.5px;font-size:31.5px;line-height:31.5px;font-family:'Liberation Serif',serif;font-style:italic;font-weight:bold;color:#15110a;transform-origin:0 0;transform:scaleX(0.79)">аэстро»</div>
<div class="t" id="sub" style="left:313px;top:285px;font-weight:bold;font-size:14.6px;line-height:14.6px;color:#15110a">Профессиональная фотография</div>
<div class="t" id="phone" style="left:363px;top:380.5px;font-size:14px;line-height:14px;color:#221d12">Моб. +7(910)1501240</div>
<div class="t" id="www" style="left:373px;top:397.2px;font-size:14.3px;line-height:14.3px;color:#221d12">www.example.com</div>
<svg class="a" id="caps" style="left:0;top:0" width="1000" height="565"><g fill="none" stroke="#15110a" stroke-linecap="round" stroke-linejoin="round">
<path d="M274 231 C268 229 270 223 279 223 C286 223 291 226 297 226 C302 226 306 224 305 222.5 C304 221 299 222 295 226" stroke-width="2.40"/>
<path d="M294 227 C291 235 285 244 279 250" stroke-width="3.84"/>
<ellipse cx="286" cy="239" rx="11.5" ry="7" transform="rotate(-50 286 239)" stroke-width="2.88"/>
<path d="M278 247 C271 242 262 243 260 248.5 C258 254 265 256.5 272 254.5 C278 252.5 283 250 287 246" stroke-width="2.64"/>
<path d="M267 249 C268 246.5 272.5 246 275 248" stroke-width="1.80"/>
<path d="M478 233 C474 229 476 224.5 484 224.5 C492 224.5 500 224.6 506 224.6" stroke-width="2.40"/>
<path d="M485 240.5 C480 241.5 477 236 481 232 C485 228 493 229 490.5 236" stroke-width="2.16"/>
<path d="M504 225 C499 234 494 244 489.5 252" stroke-width="2.88"/>
<path d="M507.5 225 C503 234 498 244 493.5 252" stroke-width="1.56"/>
<path d="M517 226 C519 224 521 223.5 523 224 C519 233 514 243 510.5 251.5" stroke-width="3.60"/>
<path d="M490 250 C484 253 476 253.5 470 251.5 C464 249.5 463 243 468 241 C472 240 475 244 472 247" stroke-width="2.40"/>
</g></svg>
<svg class="a" style="left:0;top:0" width="1000" height="565">
<defs><g id="half" fill="none" stroke="#15110a">
<path d="M388.5 356 C390 355 390 352.5 392 351.5 C393.5 352 394 354 394.5 356 Z" fill="#15110a" stroke="none"/>
<path d="M375 356 C385 357.5 392 359.3 400 359.3" stroke-width="1.1"/>
<path d="M400 359.3 C405 354 410 351 416 350.8 C419 350.5 421 351 422 353 C423 355 424 357 425 359.5 C421 357.5 417 356 412 356.2 C407 356.5 403 358 400 359.3 Z" fill="#15110a" stroke-width=".6"/>
<path d="M392 356 C396 357 399 359 403 360.5 C410 363 420 364.5 426 363 C430 362 432 360.5 433.5 359.5" stroke-width="1.5"/>
</g></defs>
<path d="M320 356 L542 356" fill="none" stroke="#15110a" stroke-width="1.4"/>
<g transform="translate(-1,0)"><use href="#half"/></g>
<use href="#half" transform="translate(866,0) scale(-1,1)"/>
<ellipse cx="432.5" cy="352" rx="9" ry="6" fill="none" stroke="#15110a" stroke-width="1.6"/>
<ellipse cx="432.5" cy="352" rx="5.5" ry="5.5" fill="none" stroke="#15110a" stroke-width="1"/>
<ellipse cx="432.5" cy="352" rx="1.8" ry="5.5" fill="#15110a"/>
<rect x="394.5" y="203.5" width="198" height="171" fill="none" stroke="#fff8d8" stroke-width="1"/>
<rect x="394.5" y="203.5" width="198" height="171" fill="none" stroke="#2a2a2a" stroke-width="1" stroke-dasharray="2.5 1.5"/>
</svg>
<div class="a" style="left:507px;top:49px;width:125px;height:71px;background:#232323;"></div>
<div class="a" style="left:507px;top:48px;width:124px;height:1.5px;background:#5a5a5a;"></div>
<div class="a" style="left:508px;top:50px;width:123px;height:11px;background:#262626;"></div>
<div class="a" style="left:510px;top:51px;width:28px;height:10px;background:#2b2b2b;"></div>
<div class="a" style="left:539px;top:51px;width:23px;height:10px;background:#434343;"></div>
<div class="a" style="left:562px;top:51px;width:31px;height:10px;background:#2b2b2b;"></div>
<div class="t" style="left:512px;top:52px;font-size:6px;line-height:8px;color:#a8a8a8;line-height:8px">Transform</div>
<div class="t" style="left:540px;top:52px;font-size:6px;line-height:8px;color:#ccc;line-height:8px">&#8661;</div>
<div class="t" style="left:545px;top:52px;font-size:6px;line-height:8px;color:#f0f0f0;font-weight:bold;line-height:8px">Align</div>
<div class="t" style="left:566px;top:52px;font-size:6px;line-height:8px;color:#a8a8a8;line-height:8px">Pathfinder</div>
<svg class="a" style="left:609px;top:54px" width="6" height="5" viewBox="0 0 6 5"><path d="M0 0 L2.8 2.5 L0 5 Z M3 0 L5.8 2.5 L3 5 Z" fill="#ddd"/></svg>
<div class="a" style="left:618px;top:52px;width:1px;height:8px;background:#3a3a3a;"></div>
<svg class="a" style="left:620px;top:53px" width="10" height="6" viewBox="0 0 10 6"><path d="M0 1.5 L3 1.5 L1.5 3.5 Z" fill="#ddd"/><g fill="#bbb"><rect x="4" y="0" width="6" height="1.2"/><rect x="4" y="2.4" width="6" height="1.2"/><rect x="4" y="4.8" width="6" height="1.2"/></g></svg>
<div class="a" style="left:508px;top:61px;width:123px;height:58px;background:#454545;"></div>
<div class="t" style="left:511px;top:64px;font-size:5.6px;line-height:7.6px;color:#eee;font-weight:bold;line-height:8px;letter-spacing:-0.1px">Align Objects:</div>
<div class="a" style="left:509px;top:89.5px;width:121px;height:1px;background:#3a3a3a;"></div>
<div class="t" style="left:511px;top:94px;font-size:5.6px;line-height:7.6px;color:#eee;font-weight:bold;line-height:8px;letter-spacing:-0.2px">Distribute Objects:</div>
<svg class="a" style="left:514px;top:75px" width="10" height="10" viewBox="0 0 10 10"><g fill="none" stroke="#e0e0e0" stroke-width="1"><path d="M1 0 V9"/><rect x="2" y="1" width="4" height="3" fill="#e0e0e0"/><rect x="2" y="5" width="7" height="3"/></g></svg>
<svg class="a" style="left:533px;top:75px" width="10" height="10" viewBox="0 0 10 10"><g fill="none" stroke="#e0e0e0" stroke-width="1"><path d="M4.5 0 V9"/><rect x="3" y="1" width="3" height="3" fill="#e0e0e0"/><rect x="1" y="5" width="7" height="3"/></g></svg>
<svg class="a" style="left:552px;top:75px" width="10" height="10" viewBox="0 0 10 10"><g fill="none" stroke="#e0e0e0" stroke-width="1"><path d="M8 0 V9"/><rect x="3" y="1" width="4" height="3" fill="#e0e0e0"/><rect x="0.5" y="5" width="7" height="3"/></g></svg>
<svg class="a" style="left:579px;top:75px" width="10" height="10" viewBox="0 0 10 10"><g fill="none" stroke="#e0e0e0" stroke-width="1"><path d="M0 1 H9"/><rect x="1" y="2" width="3" height="7"/><rect x="5" y="2" width="3" height="4" fill="#e0e0e0"/></g></svg>
<svg class="a" style="left:597px;top:75px" width="10" height="10" viewBox="0 0 10 10"><g fill="none" stroke="#e0e0e0" stroke-width="1"><path d="M0 4.5 H9"/><rect x="1" y="1" width="3" height="7"/><rect x="5" y="2.5" width="3" height="4" fill="#e0e0e0"/></g></svg>
<svg class="a" style="left:616px;top:75px" width="10" height="10" viewBox="0 0 10 10"><g fill="none" stroke="#e0e0e0" stroke-width="1"><path d="M0 8.5 H9"/><rect x="1" y="1" width="3" height="7"/><rect x="5" y="4" width="3" height="4" fill="#e0e0e0"/></g></svg>
<svg class="a" style="left:514px;top:105px" width="10" height="10" viewBox="0 0 10 10"><g fill="none" stroke="#e0e0e0" stroke-width="1"><path d="M0 1 H9 M0 8 H9"/><rect x="2" y="3" width="5" height="3" fill="#e0e0e0"/></g></svg>
<svg class="a" style="left:532px;top:105px" width="10" height="10" viewBox="0 0 10 10"><g fill="none" stroke="#e0e0e0" stroke-width="1"><path d="M0 4.5 H9"/><rect x="1.5" y="2" width="6" height="5"/></g></svg>
<svg class="a" style="left:551px;top:105px" width="10" height="10" viewBox="0 0 10 10"><g fill="none" stroke="#e0e0e0" stroke-width="1"><path d="M0 8 H9 M2 1 H7"/><rect x="1.5" y="4" width="6" height="3"/></g></svg>
<svg class="a" style="left:578px;top:105px" width="10" height="10" viewBox="0 0 10 10"><g fill="none" stroke="#e0e0e0" stroke-width="1"><path d="M1 0 V9 M8 0 V9"/><rect x="3" y="2" width="3" height="5" fill="#e0e0e0"/></g></svg>
<svg class="a" style="left:597px;top:105px" width="10" height="10" viewBox="0 0 10 10"><g fill="none" stroke="#e0e0e0" stroke-width="1"><path d="M4.5 0 V9"/><rect x="2" y="2" width="5" height="5"/></g></svg>
<svg class="a" style="left:616px;top:105px" width="10" height="10" viewBox="0 0 10 10"><g fill="none" stroke="#e0e0e0" stroke-width="1"><path d="M1 0 V9 M8 0 V9"/><rect x="3" y="2.5" width="3" height="4" fill="#e0e0e0"/></g></svg>
<div class="a" style="left:631px;top:44px;width:55px;height:7px;background:#232323;"></div>
<svg class="a" style="left:669px;top:46px" width="6" height="4" viewBox="0 0 6 4"><path d="M0 2 L2.5 0 V4 Z M6 2 L3.5 0 V4 Z" fill="#bbb"/></svg>
<svg class="a" style="left:679px;top:45.5px" width="5" height="5" viewBox="0 0 5 5"><path d="M1 1 L4 4 M4 1 L1 4" stroke="#ccc" stroke-width="1.1"/></svg>
<div class="a" style="left:631px;top:51px;width:55px;height:53px;background:#232323;"></div>
<div class="a" style="left:632px;top:51px;width:53px;height:52px;background:#464646;border-top:1px solid #505050"></div>
<div class="a" style="left:653px;top:54px;width:10px;height:1.5px;background:#222;"></div>
<svg class="a" style="left:636px;top:58px" width="11" height="11" viewBox="0 0 11 11"><g fill="#ddd"><rect x="0" y="0" width="2" height="2"/><rect x="0" y="4.5" width="2" height="2"/><rect x="0" y="9" width="2" height="2"/><rect x="4.5" y="0" width="2" height="2"/><rect x="4.5" y="9" width="2" height="2"/><rect x="9" y="0" width="2" height="2"/><rect x="9" y="4.5" width="2" height="2"/><rect x="9" y="9" width="2" height="2"/></g><circle cx="5.5" cy="5.5" r="1" fill="#888"/></svg>
<div class="t" style="left:651px;top:60px;font-size:6px;line-height:8px;color:#eee;font-weight:bold;line-height:8px;letter-spacing:-0.2px">Transform</div>
<div class="a" style="left:634px;top:73px;width:50px;height:12px;background:#2e2e2e;"></div>
<svg class="a" style="left:637px;top:74px" width="10" height="10" viewBox="0 0 10 10"><g fill="none" stroke="#e0e0e0" stroke-width="1"><path d="M1 0 V9"/><rect x="2" y="1" width="4" height="3" fill="#e0e0e0"/><rect x="2" y="5" width="7" height="3"/></g></svg>
<div class="t" style="left:651px;top:75px;font-size:6px;line-height:8px;color:#eee;font-weight:bold;line-height:8px">Align</div>
<svg class="a" style="left:637px;top:90px" width="10" height="10" viewBox="0 0 10 10"><g fill="none" stroke="#e0e0e0" stroke-width="1"><rect x="0.5" y="0.5" width="5" height="5" fill="#888"/><rect x="4" y="4" width="5" height="5" fill="#eee"/></g></svg>
<div class="t" style="left:651px;top:91px;font-size:6px;line-height:8px;color:#eee;font-weight:bold;line-height:8px;letter-spacing:-0.2px">Pathfinder</div>
</body></html>
